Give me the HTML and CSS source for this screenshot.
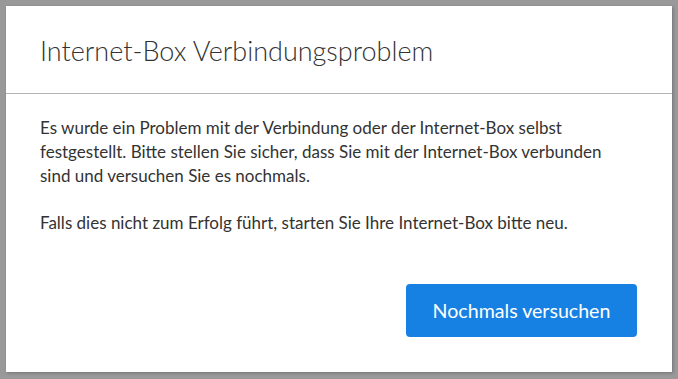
FILE: index.html
```html
<!DOCTYPE html>
<html lang="de">
<head>
    <meta charset="UTF-8">
    <title>Internet-Box Verbindungsproblem</title>
    <link rel="stylesheet" href="styles.css">
</head>
<body>
    <div class="dialog">
        <div class="dialog-header">
            <h2>Internet-Box Verbindungsproblem</h2>
        </div>
        <div class="dialog-body">
            <p>Es wurde ein Problem mit der Verbindung oder der Internet-Box selbst festgestellt. Bitte stellen Sie sicher, dass Sie mit der Internet-Box verbunden sind und versuchen Sie es nochmals.</p>
            <p>Falls dies nicht zum Erfolg führt, starten Sie Ihre Internet-Box bitte neu.</p>
        </div>
        <div class="dialog-footer">
            <button class="btn-retry">Nochmals versuchen</button>
        </div>
    </div>
</body>
</html>
```

FILE: styles.css
```css
body {
    font-family: Lato, "Liberation Sans", sans-serif;
    margin: 0;
    padding: 6px;
    background: #999;
}
.dialog {
    background: white;
    width: 666px;
    height: 366px;
    display: flex;
    flex-direction: column;
    box-shadow: 1px 1px 3px rgba(0,0,0,0.25);
}
.dialog-header {
    height: 85px;
    border-bottom: 1px solid #b3b3b3;
    padding: 2px 34px 0;
    display: flex;
    align-items: center;
}
.dialog-header h2 {
    margin: 0;
    font-size: 27px;
    font-weight: 300;
    color: #333;
}
.dialog-body {
    padding: 22px 34px 0;
    flex: 1;
}
.dialog-body p {
    margin: 0 0 23px;
    max-width: 585px;
    font-size: 17px;
    line-height: 24px;
    color: #333;
}
.dialog-footer {
    display: flex;
    justify-content: flex-end;
    padding: 0 35px 35px;
}
.btn-retry {
    background: #1781e3;
    color: white;
    border: none;
    border-radius: 4px;
    width: 231px;
    height: 53px;
    font-family: inherit;
    font-size: 19.6px;
}
```
